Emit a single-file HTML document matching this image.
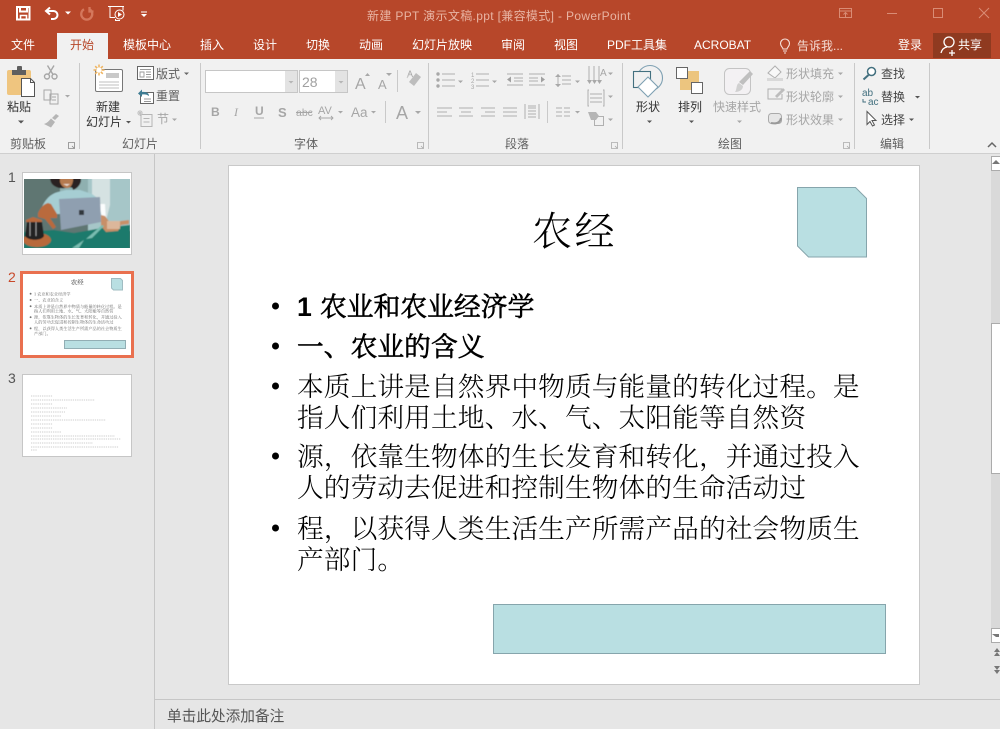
<!DOCTYPE html>
<html lang="zh"><head><meta charset="utf-8"><title>PowerPoint</title>
<style>
html,body{margin:0;padding:0;background:#e6e6e6;width:1000px;height:729px;overflow:hidden}
svg{display:block;position:absolute;left:0;top:0}
text{font-family:"Liberation Sans","Noto Sans CJK SC",sans-serif;font-size:12px;white-space:pre}
.t{fill:#fff}
.d{fill:#444}
.m{fill:#a6a6a6}
.g{fill:#5f5f5f}
.s{font-family:"Liberation Serif","Noto Serif CJK SC",serif;font-size:26.67px;fill:#000;letter-spacing:.14px;font-weight:300}
.b{stroke:#000;stroke-width:.8px}
.i{fill:none;stroke:#a8a8a8;stroke-width:1}
.c{fill:#a8a8a8}
.k{fill:#666}
</style></head><body>
<svg width="1000" height="729" viewBox="0 0 1000 729" xmlns="http://www.w3.org/2000/svg">
<defs><filter id="soft" x="-5%" y="-5%" width="110%" height="110%"><feGaussianBlur stdDeviation=".6"/></filter></defs>
<!-- backgrounds -->
<rect width="1000" height="729" fill="#e6e6e6"/>
<rect width="1000" height="59" fill="#b7472a"/>
<rect y="59" width="1000" height="94" fill="#f1f1f1"/>
<rect y="153" width="1000" height="1" fill="#cfcfcf"/>
<rect x="57" y="33" width="51" height="26" fill="#f1f1f1"/>
<rect x="933" y="33" width="58" height="25" fill="#8f3a20"/>

<!-- quick access -->
<g fill="none" stroke="#fff" stroke-width="2">
<path d="M17 7h12.500v12.500H17z"/>
<path d="M20 7.500v4h7v-4"/>
<path d="M20.500 19.500v-4h6v4" stroke-width="1.600"/>
<path d="M50 7.500l-4 3.500 4 3.500M46 11h7.500a4 4 0 0 1 0 8H51" stroke-width="2"/>
</g>
<path d="M65 11.500h6l-3 3z" fill="#fff"/>
<path d="M89.500 9.300a5.500 5.500 0 1 1-5.500 0M89.500 7v4.500h4" fill="none" stroke="#d4775c" stroke-width="2.300"/>
<g fill="none" stroke="#fff" stroke-width="1">
<path d="M108 6.500h16M110 6.500v11h5M123 6.500v4"/>
<circle cx="119.500" cy="14.500" r="4.500"/>
<path d="M116 20.500h4M115.500 19v2"/>
</g>
<path d="M118 12l4 2.500-4 2.500z" fill="#fff"/>
<path d="M141 11.500h6v1h-6zM141 14h6l-3 3z" fill="#fff"/>
<text x="367" y="20" style="fill:#e8b4a3;letter-spacing:.34px">新建 PPT 演示文稿.ppt [兼容模式] - PowerPoint</text>
<g fill="none" stroke="#d98c75" stroke-width="1">
<rect x="839.500" y="8.500" width="12" height="9"/><path d="M839.500 11h12M845.500 17v-4M843.500 14.500l2-2 2 2"/>
<path d="M887 13.500h10"/>
<rect x="933.500" y="8.500" width="9" height="9"/>
<path d="M979 8l10 10M989 8l-10 10"/>
</g>

<!-- tabs -->
<text class="t" x="11" y="49">文件</text>
<text x="70" y="49" style="fill:#b7472a">开始</text>
<text class="t" x="123" y="49">模板中心</text>
<text class="t" x="200" y="49">插入</text>
<text class="t" x="253" y="49">设计</text>
<text class="t" x="306" y="49">切换</text>
<text class="t" x="359" y="49">动画</text>
<text class="t" x="412" y="49">幻灯片放映</text>
<text class="t" x="501" y="49">审阅</text>
<text class="t" x="554" y="49">视图</text>
<text class="t" x="607" y="49">PDF工具集</text>
<text class="t" x="694" y="49">ACROBAT</text>
<text x="797" y="50" style="fill:#f4dcd4">告诉我...</text>
<text class="t" x="898" y="49">登录</text>
<text class="t" x="958" y="49">共享</text>
<g fill="none" stroke="#f6e2dc" stroke-width="1.100">
<path d="M783 49c0-1.500-2.500-2.500-2.500-5.500a4.500 4.500 0 0 1 9 0c0 3-2.500 4-2.500 5.500z"/><path d="M783 51h4M784 53h2"/>
</g>
<g fill="none" stroke="#fff" stroke-width="1.300">
<circle cx="949" cy="42" r="5"/><path d="M941 53c1-4 3-5.500 6-6M952 50v6M949 53h6"/>
</g>

<!-- group separators -->
<g fill="#c9c9c9">
<rect x="79" y="63" width="1" height="86"/><rect x="200" y="63" width="1" height="86"/>
<rect x="428" y="63" width="1" height="86"/><rect x="622" y="63" width="1" height="86"/>
<rect x="854" y="63" width="1" height="86"/><rect x="929" y="63" width="1" height="86"/>
<rect x="397" y="70" width="1" height="22"/><rect x="385" y="101" width="1" height="22"/><rect x="547" y="101" width="1" height="22"/>
</g>

<!-- clipboard group -->
<rect x="7" y="70" width="24" height="25" rx="2" fill="#efc57f"/>
<path d="M12 70h14v5H12z" fill="#5f5f5f"/><rect x="17" y="66" width="5" height="5" rx="1" fill="#5f5f5f"/>
<path d="M21.500 78.500h9l4 4v14h-13z" fill="#fff" stroke="#555"/>
<path d="M30.500 78.500v4h4" fill="none" stroke="#555"/>
<text class="d" x="7" y="111" style="fill:#333">粘贴</text>
<path d="M18 120.500h6l-3 3z" fill="#555"/>
<g fill="none" stroke="#a6a6a6" stroke-width="1.400">
<circle cx="47" cy="76.500" r="2.500"/><circle cx="54.500" cy="76.500" r="2.500"/>
<path d="M48.500 74.500L54 65.500M53 74.500L47.500 65.500"/>
</g>
<g class="i"><path d="M44 90h7v10h-7zM50 94h8v10h-8zM52 97h4M52 100h4"/></g>
<path d="M65 95h5l-2.500 2.500z" class="c"/>
<path d="M52 118l4-4 3 2-4 4zM51 118.500l4 3.500-4 5.500-7-3.500c3-1 5-3 7-5.500z" fill="#b5b5b5"/>
<text x="10" y="148" class="g">剪贴板</text>
<path d="M68.500 142.500h6v6h-6zM72 146l2 2" fill="none" stroke="#888" stroke-width=".8"/>

<!-- slides group -->
<rect x="95.500" y="69.500" width="27" height="22" rx="1.500" fill="#fff" stroke="#777"/>
<rect x="106" y="73" width="13" height="5" fill="#c9c9c9"/>
<path d="M99 82h20M99 85h20M99 88h20" stroke="#aaa" stroke-width=".8"/>
<path d="M99 64.500v11M93.500 70h11M95.200 66.200l7.600 7.600M102.800 66.200l-7.600 7.600" stroke="#efb45f" stroke-width="1.500"/>
<circle cx="99" cy="70" r="2.600" fill="#fff"/>
<text class="d" x="96" y="111" style="fill:#333">新建</text>
<text class="d" x="86" y="126" style="fill:#333">幻灯片</text>
<path d="M126 121h5l-2.500 2.500z" fill="#555"/>
<rect x="137.500" y="66.500" width="16" height="13" fill="#fff" stroke="#666"/>
<path d="M140 69.500h11M140 72h4v5h-4zM146 72h5M146 74.500h5M146 77h5" stroke="#999" stroke-width=".9" fill="none"/>
<text x="156" y="78" class="g">版式</text>
<path d="M184 72.500h5l-2.500 2.500z" fill="#666"/>
<rect x="140.500" y="92.500" width="13" height="11" fill="#fff" stroke="#666"/>
<path d="M144 99h7M144 101.500h7" stroke="#999" stroke-width=".9"/>
<path d="M138 93.500l4-4v2.500c4-.5 7 1 7 4-2-1.500-4-2-7-1.500v2.500z" fill="#3f7c93"/>
<text x="156" y="100" class="g">重置</text>
<path d="M141 114.500h11v12h-11zM143.500 118.500h6M143.500 122h6" fill="none" stroke="#b5b5b5"/>
<path d="M140 110v6M137 113h6M138 111l4 4M142 111l-4 4" stroke="#c4c4c4"/>
<text x="157" y="123" class="m">节</text>
<path d="M172 118.500h5l-2.500 2.500z" class="c"/>
<text x="122" y="148" class="g">幻灯片</text>

<!-- font group -->
<rect x="205.500" y="70.500" width="92" height="22" fill="#fff" stroke="#c6c6c6"/>
<rect x="285" y="71" width="12" height="21" fill="#e3e3e3"/>
<path d="M288.500 81h5l-2.500 2.500z" fill="#b5b5b5"/>
<rect x="299.500" y="70.500" width="48" height="22" fill="#fff" stroke="#c6c6c6"/>
<rect x="335" y="71" width="12" height="21" fill="#e3e3e3"/>
<path d="M338.500 81h5l-2.500 2.500z" fill="#b5b5b5"/>
<text x="302" y="87" style="font-size:14px;fill:#a0a0a0">28</text>
<text x="355" y="89" style="font-size:16px;fill:#a6a6a6">A</text>
<path d="M365 76l2.500-3 2.500 3z" class="c"/>
<text x="378" y="89" style="font-size:13px;fill:#a6a6a6">A</text>
<path d="M386 73h6l-3 3z" class="c"/>
<text x="407" y="77" style="font-size:9px;fill:#a6a6a6">A</text>
<path d="M416 73l5 4-7 9-5-4z" fill="#bdbdbd"/><path d="M407 78l3-5" stroke="#c9c9c9"/>
<text x="211" y="116" style="font-size:12px;font-weight:700;fill:#a6a6a6">B</text>
<text x="234" y="116" style="font-size:12px;font-style:italic;font-family:'Liberation Serif',serif;fill:#a6a6a6">I</text>
<text x="255" y="115" style="font-size:12px;font-weight:700;fill:#a6a6a6">U</text>
<rect x="254" y="117.500" width="10" height="1" fill="#a6a6a6"/>
<text x="278" y="117" style="font-size:13px;font-weight:700;fill:#a6a6a6">S</text>
<text x="296" y="116" style="font-size:10.500px;fill:#a6a6a6">abc</text>
<rect x="296" y="112" width="16" height="1" fill="#a6a6a6"/>
<text x="318" y="114" style="font-size:11px;fill:#a6a6a6">AV</text>
<path d="M319 118h14M321 116l-2 2 2 2M331 116l2 2-2 2" fill="none" stroke="#a6a6a6" stroke-width=".9"/>
<path d="M338 111h5l-2.500 2.500z" class="c"/>
<text x="351" y="117" style="font-size:13.500px;fill:#a6a6a6">Aa</text>
<path d="M371 111h5l-2.500 2.500z" class="c"/>
<text x="396" y="119" style="font-size:18px;fill:#a6a6a6">A</text>
<path d="M415 111h6l-3 3z" class="c"/>
<text x="294" y="148" class="g">字体</text>
<path d="M417.500 142.500h6v6h-6zM421 146l2 2" fill="none" stroke="#aaa" stroke-width=".8"/>

<!-- paragraph group -->
<g fill="none" stroke="#b0b0b0" stroke-width="1">
<path d="M442 74h13M442 80h13M442 86h13"/>
<path d="M476 74h13M476 80h13M476 86h13"/>
<path d="M507 74h16M514 78h9M514 81h9M507 85h16"/>
<path d="M529 74h16M529 78h9M529 81h9M529 85h16"/>
<path d="M562 76h9M562 80h9M562 84h9M558 74v13"/>
<path d="M589 66v15M594 66v15M599 66v15"/>
<path d="M437 108h15M437 112h10M437 116h15M459 108h14M461 112h10M459 116h14M481 108h14M485 112h10M481 116h14M503 108h14M503 112h14M503 116h14"/>
<path d="M525 104v15M539 104v15M528 108h8M528 111h8M528 114h8M528 117h8M528 106h8"/>
<path d="M556 108h6M564 108h6M556 112h6M564 112h6M556 116h6M564 116h6"/>
<path d="M589 90h-1v16h1M603 90h1v16h-1M590 94h12M590 98h12M590 102h12"/>
<rect x="594.500" y="116.500" width="9" height="9"/>
</g>
<path d="M507 79.500l4-3v6zM545 79.500l-4-3v6z" fill="#a0a0a0"/>
<path d="M555 77l3-3 3 3zM555 84l3 3 3-3z" class="c"/>
<path d="M587 80l2.500 4 2.500-4zM592 80l2.500 4 2.500-4zM597 80l2.500 4 2.500-4z" class="c"/>
<text x="600" y="76" style="font-size:10px;fill:#a6a6a6">A</text>
<path d="M588 112h8l3 4-3 4h-5z" fill="#b5b5b5"/>
<circle cx="438" cy="74" r="1.700" class="c"/><circle cx="438" cy="80" r="1.700" class="c"/><circle cx="438" cy="86" r="1.700" class="c"/>
<text x="471" y="77" style="font-size:6px;fill:#a6a6a6">1</text><text x="471" y="83" style="font-size:6px;fill:#a6a6a6">2</text><text x="471" y="89" style="font-size:6px;fill:#a6a6a6">3</text>
<path d="M458 80.500h5l-2.500 2.500zM492 80.500h5l-2.500 2.500zM575 80.500h5l-2.500 2.500zM608 72.500h5l-2.500 2.500zM608 95.500h5l-2.500 2.500zM608 118.500h5l-2.500 2.500zM575 111h5l-2.500 2.500z" class="c"/>
<text x="505" y="148" class="g">段落</text>
<path d="M611.500 142.500h6v6h-6zM615 146l2 2" fill="none" stroke="#aaa" stroke-width=".8"/>

<!-- drawing group -->
<circle cx="650" cy="78" r="12.500" fill="none" stroke="#7ea0b2" stroke-width="1.100"/>
<rect x="633.500" y="71.500" width="17" height="16" fill="#f1f1f1" stroke="#43707f" stroke-width="1.100"/>
<path d="M648 77l10 10-10 10-10-10z" fill="#fff" stroke="#7ea0b2" stroke-width="1.100"/>
<text class="d" x="636" y="111" style="fill:#333">形状</text>
<path d="M647 120.500h5l-2.500 2.500z" fill="#555"/>
<rect x="680" y="71" width="19" height="19" fill="#ecc57f"/>
<rect x="676.500" y="67.500" width="11" height="11" fill="#fff" stroke="#666"/>
<rect x="691.500" y="82.500" width="11" height="11" fill="#fff" stroke="#666"/>
<text class="d" x="678" y="111" style="fill:#333">排列</text>
<path d="M689 120.500h5l-2.500 2.500z" fill="#555"/>
<rect x="724.500" y="68.500" width="26" height="26" rx="5" fill="#f3f1f3" stroke="#c4c4c4"/>
<path d="M753 74l-10 11-4-3 11-11z" fill="#bfbfbf"/><path d="M739 83l4 3c0 4-4 6-8 6 2-2 1-8 4-9z" fill="#d0d0d0"/>
<text x="713" y="111" class="m">快速样式</text>
<path d="M737 120.500h5l-2.500 2.500z" class="c"/>
<path d="M768 73l7-7 6 6-6 6z" fill="#f8f8f8" stroke="#b0b0b0"/><rect x="767" y="78" width="16" height="3" fill="#d9d9d9"/>
<text x="786" y="78" class="m">形状填充</text>
<path d="M838 72.500h5l-2.500 2.500z" class="c"/>
<path d="M782 89h-14v10h14v-5" fill="none" stroke="#b0b0b0"/><path d="M775 96l8-8 2 2-8 8z" fill="#bdbdbd"/>
<text x="786" y="101" class="m">形状轮廓</text>
<path d="M838 95.500h5l-2.500 2.500z" class="c"/>
<rect x="768.500" y="113.500" width="13" height="10" rx="3" fill="#e6e6e6" stroke="#aaa"/><path d="M771 123c5 1 9 0 10-5" stroke="#999" fill="none" stroke-width="2"/>
<text x="786" y="124" class="m">形状效果</text>
<path d="M838 118.500h5l-2.500 2.500z" class="c"/>
<text x="718" y="148" class="g">绘图</text>
<path d="M843.500 142.500h6v6h-6zM847 146l2 2" fill="none" stroke="#aaa" stroke-width=".8"/>

<!-- edit group -->
<circle cx="871.500" cy="71.500" r="4" fill="#fff" stroke="#43707f" stroke-width="1.500"/>
<path d="M868.500 75l-5 4.500" stroke="#43707f" stroke-width="2"/>
<text x="881" y="78" class="d">查找</text>
<text x="862" y="96" style="font-size:10px;fill:#43707f">ab</text>
<text x="868" y="105" style="font-size:10px;fill:#43707f">ac</text>
<path d="M863 99v3h3" fill="none" stroke="#43707f"/>
<text x="881" y="101" class="d">替换</text>
<path d="M915 96h5l-2.500 2.500z" fill="#555"/>
<path d="M867 111.500v13l3-3 2.500 4.500 2-1-2.500-4.500h4z" fill="#fff" stroke="#555"/>
<text x="881" y="124" class="d">选择</text>
<path d="M909 118.500h5l-2.500 2.500z" fill="#555"/>
<text x="880" y="148" class="g">编辑</text>
<path d="M988 147l4-4 4 4" fill="none" stroke="#666" stroke-width="1.500"/>

<!-- left pane -->
<rect x="154" y="154" width="1" height="575" fill="#c6c6c6"/>
<text x="8" y="182" style="font-size:14px;fill:#555">1</text>
<text x="8" y="282" style="font-size:14px;fill:#c8492a">2</text>
<text x="8" y="383" style="font-size:14px;fill:#555">3</text>

<rect x="22.500" y="172.500" width="109" height="82" fill="#fff" stroke="#c6c6c6"/>
<svg x="24" y="179" width="106" height="69" viewBox="24 179 106 69">
<g filter="url(#soft)">
<rect x="20" y="175" width="114" height="77" fill="#5f7672"/>
<rect x="60" y="175" width="32" height="30" fill="#8fb0b0"/>
<rect x="88" y="175" width="46" height="56" fill="#a6c6c8"/>
<path d="M92 175h18v30l-4 16-5-14-9-6z" fill="#d5e2e2"/>
<path d="M100 204h5l1 18-3 1-3-14z" fill="#fbfdfd"/>
<path d="M42 207c3-7 8-13 16-15l8-2h14l12 4 8 6-1 14H48z" fill="#a6ced3"/>
<path d="M50 175h31v6c-1 5-5 8-8 9 0-3-2-3-8-2-6 1-10-1-13-4-2-3-2-6-2-9z" fill="#2a2320"/>
<path d="M60 175h13v6c-1 5-3 7-6 7s-6-2-7-6z" fill="#b57a50"/>
<path d="M63 184h7l-3 2z" fill="#e9dcd2"/>
<path d="M24 232l30-2 20 3 28-5 28-3v27H24z" fill="#1c7a6c"/>
<path d="M59 199l41-2 1 25-40 8z" fill="#8f9fb0"/>
<rect x="79" y="210" width="5" height="5" fill="#33383c"/>
<path d="M38 213c3-6 6-9 10-10l3 1 6 10v4l-7 0 6 9-3 2-8-10-7-2z" fill="#b96b3c"/>
<path d="M101 215l4 1 6 8 10-3 8-1v4l-8 1-3 6-12 1-5-6z" fill="#c88f68"/>
<rect x="107" y="221" width="13" height="8" fill="#dcb79b"/>
<path d="M86 239l16-14 2 1-12 12zM72 248l12-8-5 8z" fill="#79bdb1"/>
<ellipse cx="37" cy="240" rx="14" ry="7" fill="#b8693a"/>
<path d="M27 222h15l2 14c-2 5-16 5-19 0z" fill="#232323"/>
<path d="M30 222v14M36 222v14" stroke="#9a9a9a"/>
<path d="M26 220l7-3 9 3v2H26z" fill="#b96b3c"/>
</g>
</svg>

<rect x="21.500" y="272.500" width="111" height="84" fill="#fff" stroke="#e9704f" stroke-width="3"/>
<g transform="translate(-12.300,246) scale(.156)" opacity=".7">
<text class="s b" x="533" y="246" style="font-size:40px;letter-spacing:2px">农经</text>
<text class="s" x="297" y="316">1 农业和农业经济学</text>
<text class="s" x="297" y="356">一、农业的含义</text>
<text class="s" x="297" y="396">本质上讲是自然界中物质与能量的转化过程。是</text>
<text class="s" x="297" y="427">指人们利用土地、水、气、太阳能等自然资</text>
<text class="s" x="297" y="466">源，依靠生物体的生长发育和转化，并通过投入</text>
<text class="s" x="297" y="497">人的劳动去促进和控制生物体的生命活动过</text>
<text class="s" x="297" y="538">程，以获得人类生活生产所需产品的社会物质生</text>
<text class="s" x="297" y="569">产部门。</text>
<g fill="#333"><circle cx="275" cy="306" r="6"/><circle cx="275" cy="346" r="6"/><circle cx="275" cy="386" r="6"/><circle cx="275" cy="456" r="6"/><circle cx="275" cy="528" r="6"/></g>
</g>
<path d="M111.500 278.500h9l2 2v9.500h-9l-2-2z" fill="#b9dfe2" stroke="#a0bcc2"/>
<rect x="64.500" y="340.500" width="61" height="8" fill="#b9dfe2" stroke="#92aeb4"/>

<rect x="22.500" y="374.500" width="109" height="82" fill="#fff" stroke="#c6c6c6"/>
<g stroke="#bdbdbd" stroke-width=".8" stroke-dasharray="1.300 .9" fill="none">
<path d="M31 396h22M31 400h64M31 404h22M31 408h36M31 412h34M31 416h30M31 420h75M31 424h22M31 428h22M31 432h30M31 436h84M31 439h90M31 443h62M31 447h88M31 450h6"/>
</g>

<!-- slide -->
<rect x="228.500" y="165.500" width="691" height="519" fill="#fff" stroke="#c9c9c9"/>
<text class="s" x="532" y="245" style="font-size:40px;letter-spacing:2.500px">农经</text>
<path d="M797.500 187.500h58l11 11v58.500h-58l-11-11z" fill="#b9dfe2" stroke="#86a5ac"/>
<rect x="493.500" y="604.500" width="392" height="49" fill="#b9dfe2" stroke="#86a5ac"/>
<g fill="#000"><circle cx="275.500" cy="306" r="3.500"/><circle cx="275.500" cy="346" r="3.500"/><circle cx="275.500" cy="386" r="3.500"/><circle cx="275.500" cy="456" r="3.500"/><circle cx="275.500" cy="528" r="3.500"/></g>
<text x="297" y="316" style="font-size:26.67px;font-weight:700;fill:#000">1</text>
<text class="s b" x="320" y="316">农业和农业经济学</text>
<text class="s b" x="297" y="356">一、农业的含义</text>
<text class="s" x="297" y="396">本质上讲是自然界中物质与能量的转化过程。是</text>
<text class="s" x="297" y="427">指人们利用土地、水、气、太阳能等自然资</text>
<text class="s" x="297" y="466">源，依靠生物体的生长发育和转化，并通过投入</text>
<text class="s" x="297" y="497">人的劳动去促进和控制生物体的生命活动过</text>
<text class="s" x="297" y="538">程，以获得人类生活生产所需产品的社会物质生</text>
<text class="s" x="297" y="569">产部门。</text>

<!-- scrollbar -->
<rect x="991" y="156" width="9" height="486" fill="#d9d9d9"/>
<rect x="991.500" y="156.500" width="10" height="14" fill="#fff" stroke="#ababab"/>
<path d="M996 160l-4 4h8z" fill="#777"/>
<rect x="991.500" y="323.500" width="10" height="150" fill="#fff" stroke="#ababab"/>
<rect x="991.500" y="628.500" width="10" height="14" fill="#fff" stroke="#ababab"/>
<path d="M999 634h-7l4 3h3z" fill="#777"/>
<path d="M994 652l3-4 3 4zM994 656l3-4 3 4zM994 666h6l-3 4h0zM994 670h6l-3 4z" fill="#777"/>

<!-- notes -->
<rect x="155" y="699" width="845" height="1" fill="#c6c6c6"/>
<text x="167" y="721" style="font-size:14.67px;fill:#555">单击此处添加备注</text>
</svg>
</body></html>
